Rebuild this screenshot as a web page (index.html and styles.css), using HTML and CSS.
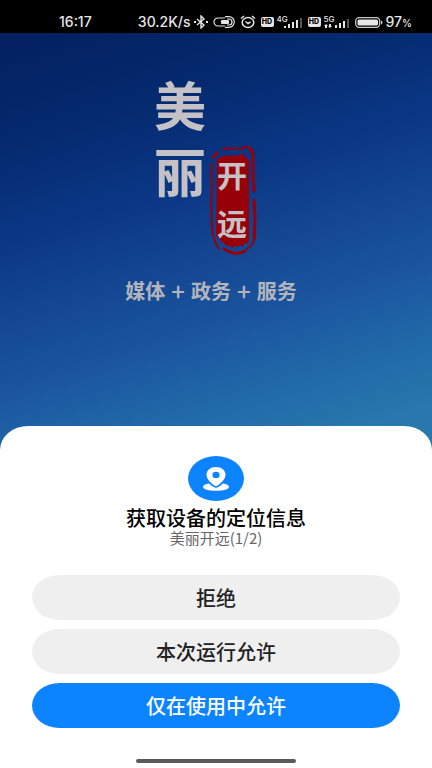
FILE: index.html
```html
<!DOCTYPE html>
<html lang="zh-CN">
<head>
  <meta charset="UTF-8">
  <meta name="viewport" content="width=device-width, initial-scale=1.0">
  <title>美丽开远</title>
  <link rel="stylesheet" href="styles.css">
</head>
<body>
  <!-- 状态栏 -->
  <header class="status-bar">
    <span class="time">16:17</span>
    <div class="status-icons">
      <span class="speed">30.2K/s</span>
      <svg class="bluetooth" width="14" height="14" viewBox="0 0 14 14" fill="none" stroke="#e6e6e6" stroke-width="1.4">
        <path d="M3 4l7 6-3 3V1l3 3-7 6"/>
        <path d="M0 7h2M12 7h2" stroke-width="2"/>
      </svg>
      <svg width="22" height="12" viewBox="0 0 22 12" fill="none" stroke="#e6e6e6" stroke-width="1.2">
        <path d="M12 2H5a4 4 0 0 0 0 8h7"/>
        <path d="M12 .7h4a5.300 5.300 0 0 1 0 10.600h-4M14 3h2a3 3 0 0 1 0 6h-2"/>
        <rect x="8" y="4" width="8" height="4" rx="1" fill="#e6e6e6" stroke="none"/>
      </svg>
      <svg width="16" height="14" viewBox="0 0 16 14" fill="none" stroke="#e6e6e6" stroke-width="1.5">
        <ellipse cx="8" cy="7.500" rx="5.800" ry="5"/>
        <path d="M1 3.500L4 1M15 3.500L12 1M5.500 6.500L8 8.500l2.500-1.500"/>
      </svg>
      <span class="hd">HD</span>
      <span class="signal">
        <span class="net">4G</span>
        <svg width="26" height="14" viewBox="0 0 26 14" fill="#e6e6e6">
          <path d="M7 11h2v2H7zM11 9h2v4h-2zM15 7h2v6h-2zM19 5h2v8h-2z"/>
          <path d="M23 3h2v10h-2z" fill="#555"/>
        </svg>
      </span>
      <span class="hd">HD</span>
      <span class="signal">
        <span class="net">5G</span>
        <svg width="26" height="14" viewBox="0 0 26 14" fill="#e6e6e6">
          <path d="M0 11l2-2 2 2H3v2H1v-2zM4 11h1V9h2v2h1l-2 2zM11 10h2v3h-2zM15 8h2v5h-2zM19 6h2v7h-2z"/>
          <path d="M23 4h2v9h-2z" fill="#555"/>
        </svg>
      </span>
      <svg class="battery" width="28" height="11" viewBox="0 0 28 11">
        <rect x=".7" y=".7" width="24" height="9.600" rx="3.500" fill="none" stroke="#c8c8c8" stroke-width="1.3"/>
        <rect x="2.500" y="2.500" width="20.500" height="6" rx="1.500" fill="#e6e6e6"/>
        <path d="M26 3.500q1.500 0 1.500 2t-1.500 2z" fill="#c8c8c8"/>
      </svg>
      <span class="percent">97<small>%</small></span>
    </div>
  </header>

  <main class="splash">
    <h1 class="logo">
      <span class="logo-main"><span>美</span><span>丽</span></span>
      <span class="seal">
        <svg class="seal-bg" width="48" height="112" viewBox="0 0 48 112" fill="#970008">
          <path d="M7 14q3-1 5-3l2 1 1-2 4 1 3-1 4 1 4-1 2-2 2 2 2 4 1-2 2 4v79l-1 3-2 1-2-1-1 4-3-2-2 2-3-1-3 2-2-2-4 0-2-3-3-1-1-3-4-3z"/>
          <g fill="none" stroke="#970008" stroke-linecap="round">
            <path d="M13 4l6-1M20 4l7-1M29 5l3-2 5-1q4 1 5 5" stroke-width="2"/>
            <path d="M39 3q4 3 4 8v15l1 20" stroke-width="3"/>
            <path d="M44 55l1 18-1 20" stroke-width="3"/>
            <path d="M45 80v11q-1 9-8 13" stroke-width="2"/>
            <path d="M35 106q-5 3-11 2" stroke-width="3"/>
            <path d="M14 104l8 4" stroke-width="3"/>
            <path d="M3 12l4-4" stroke-width="3"/>
            <path d="M2 19l-1 12 1 10-1 16 1 24 1 10" stroke-width="2"/>
            <path d="M4 93q2 7 5 11" stroke-width="2"/>
          </g>
        </svg>
        <span class="seal-text"><span>开</span><span>远</span></span>
      </span>
    </h1>
    <p class="slogan"><span>媒体</span><span class="plus">+</span><span>政务</span><span class="plus">+</span><span>服务</span></p>
  </main>

  <!-- 定位权限弹窗 -->
  <section class="sheet" role="dialog" aria-labelledby="sheet-title">
    <div class="sheet-icon">
      <svg width="28" height="26" viewBox="0 0 28 26" fill="#fff">
        <path fill-rule="evenodd" d="M14 1c-5.500 0-9.500 3.300-9.500 7.700 0 4.600 4.600 8.300 7.800 10.700q1.700 1.200 3.400 0c3.200-2.400 7.800-6.100 7.800-10.700C23.500 4.300 19.500 1 14 1zm0 4.700a3.600 3.200 0 1 1 0 6.400 3.600 3.200 0 0 1 0-6.400z"/>
        <path d="M7 17.500C3.500 18 1 19.300 1 21c0 2.300 5.500 3.800 13 3.800S27 23.300 27 21c0-1.700-2.500-3-6-3.500-1.500 1.400-3 2.500-4.700 3.600q-2.300 1.500-4.600 0C10 20 8.500 18.900 7 17.500z"/>
      </svg>
    </div>
    <h2 id="sheet-title">获取设备的定位信息</h2>
    <p class="app-name">美丽开远(1/2)</p>
    <div class="actions">
      <button type="button" class="btn">拒绝</button>
      <button type="button" class="btn">本次运行允许</button>
      <button type="button" class="btn btn-primary">仅在使用中允许</button>
    </div>
    <div class="home-bar"></div>
  </section>
</body>
</html>
```

FILE: styles.css
```css
* {
  box-sizing: border-box;
}

body {
  margin: 0;
  min-height: 100vh;
  display: flex;
  flex-direction: column;
  background: #fff;
  font-family: "Noto Sans CJK SC", sans-serif;
}

h1, h2, p {
  margin: 0;
}

/* 状态栏 */
.status-bar {
  display: flex;
  justify-content: space-between;
  height: 33px;
  padding: 12px 20px 0 59px;
  background: #000;
  color: #e6e6e6;
  font-family: Inter, sans-serif;
  font-size: 14px;
  font-weight: 500;
  line-height: 20px;
}

.status-icons {
  display: flex;
  align-items: center;
  gap: 5px;
  height: 20px;
}

.speed {
  margin-right: -2px;
}

.hd {
  width: 13px;
  height: 10px;
  border-radius: 2px;
  background: #e6e6e6;
  color: #000;
  font-size: 7px;
  font-weight: 800;
  line-height: 10px;
  text-align: center;
}

.signal {
  display: grid;
  margin-left: -2px;
}

.signal svg,
.net {
  grid-area: 1 / 1;
}

.net {
  font-size: 8px;
  line-height: 8px;
}

.percent {
  margin-left: -2px;
}

.percent small {
  font-size: 10px;
}

/* 启动页 */
.splash {
  flex: 1;
  display: flex;
  flex-direction: column;
  align-items: center;
  margin-bottom: -28px;
  padding: 38px 0 56px;
  background: linear-gradient(163deg, #03205f 0%, #052a6f 21%, #0a3785 38%, #12438f 49%, #1b569f 66%, #2068a8 78%, #2878ad 92%);
}

.logo {
  display: flex;
  gap: 4px;
  padding-right: 20px;
  color: #c4c2c6;
  font-weight: 700;
}

.logo-main {
  display: flex;
  flex-direction: column;
  font-size: 52px;
  line-height: 66px;
}

.seal {
  display: grid;
  margin-top: 74px;
}

.seal-bg,
.seal-text {
  grid-area: 1 / 1;
}

.seal-text {
  display: flex;
  flex-direction: column;
  align-items: center;
  padding: 5px 4px 0 0;
  font-size: 30px;
  line-height: 48px;
}

.slogan {
  display: flex;
  gap: 6px;
  margin-top: 22px;
  padding-right: 10px;
  color: #b3b4bc;
  font-size: 20px;
  font-weight: 700;
  line-height: 24px;
}

.plus {
  font-size: 24px;
  font-weight: 500;
}

/* 弹窗 */
.sheet {
  position: relative;
  display: flex;
  flex-direction: column;
  align-items: center;
  padding: 30px 32px 5px;
  border-radius: 28px 28px 0 0 / 24px 24px 0 0;
  background: #fff;
}

.sheet-icon {
  display: flex;
  align-items: center;
  justify-content: center;
  width: 56px;
  height: 45px;
  border-radius: 50%;
  background: #0d84ff;
}

.sheet h2 {
  margin-top: 6px;
  color: #000;
  font-size: 20px;
  font-weight: 500;
  line-height: 22px;
}

.app-name {
  color: #666;
  font-size: 15px;
  line-height: 18px;
}

.actions {
  display: flex;
  flex-direction: column;
  align-self: stretch;
  gap: 9px;
  margin-top: 28px;
}

.btn {
  height: 45px;
  padding: 0;
  border: none;
  border-radius: 28px / 23px;
  background: #efefef;
  color: #222;
  font-family: inherit;
  font-size: 20px;
  font-weight: 500;
  cursor: pointer;
}

.btn-primary {
  background: #0d84ff;
  color: #fff;
}

.home-bar {
  width: 160px;
  height: 4px;
  margin-top: 31px;
  border-radius: 2px;
  background: #5a5a5a;
}
```
